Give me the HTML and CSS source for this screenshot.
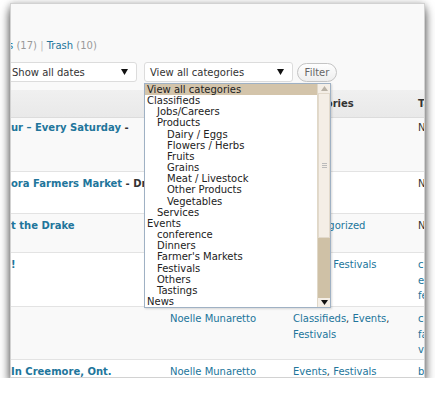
FILE: index.html
```html
<!DOCTYPE html>
<html>
<head>
<meta charset="utf-8">
<link rel="stylesheet" href="styles.css">
</head>
<body>
<div class="window">
  <div class="status"><a class="cut">s</a> <span class="count">(17)</span> <span class="sep">|</span> <a>Trash</a> <span class="count">(10)</span></div>
  <div class="tablenav">
    <div class="select dates"><span>Show all dates</span><svg class="arrow" width="7" height="6" viewBox="0 0 7 6"><path d="M0 0H7L3.5 6Z"/></svg></div>
    <div class="select cats"><span>View all categories</span><svg class="arrow" width="7" height="6" viewBox="0 0 7 6"><path d="M0 0H7L3.5 6Z"/></svg></div>
    <button class="filter">Filter</button>
  </div>
  <div class="table">
    <div class="row head">
      <div class="cell"></div><div class="cell"></div><div class="cell">Categories</div><div class="cell">Tags</div>
    </div>
    <div class="row alt h54 first">
      <div class="cell title"><a>ur &#8211; Every Saturday</a> <span class="state">-</span></div>
      <div class="cell"></div>
      <div class="cell"></div>
      <div class="cell none">No Tags</div>
    </div>
    <div class="row h42">
      <div class="cell title"><a>ora Farmers Market</a> <span class="state">- Dr</span></div>
      <div class="cell"></div>
      <div class="cell"></div>
      <div class="cell none">No Tags</div>
    </div>
    <div class="row alt h39">
      <div class="cell title"><a>t the Drake</a></div>
      <div class="cell"></div>
      <div class="cell"><a>Uncategorized</a></div>
      <div class="cell none">No Tags</div>
    </div>
    <div class="row h54">
      <div class="cell title"><a>!</a></div>
      <div class="cell"></div>
      <div class="cell"><a>Events</a>, <a>Festivals</a></div>
      <div class="cell tags"><a>classifieds</a>, <a>events</a>, <a>festivals</a></div>
    </div>
    <div class="row alt h53">
      <div class="cell title"></div>
      <div class="cell"><a>Noelle Munaretto</a></div>
      <div class="cell"><a>Classifieds</a>, <a>Events</a>, <a>Festivals</a></div>
      <div class="cell tags"><a>canning</a>, <a>farms</a>, <a>vegetables</a></div>
    </div>
    <div class="row h40">
      <div class="cell title"><a>In Creemore, Ont.</a></div>
      <div class="cell"><a>Noelle Munaretto</a></div>
      <div class="cell"><a>Events</a>, <a>Festivals</a></div>
      <div class="cell tags"><a>baking</a></div>
    </div>
  </div>

  <div class="dropdown">
    <ul class="options">
      <li class="selected">View all categories</li>
      <li>Classifieds</li>
      <li class="l1">Jobs/Careers</li>
      <li class="l1">Products</li>
      <li class="l2">Dairy / Eggs</li>
      <li class="l2">Flowers / Herbs</li>
      <li class="l2">Fruits</li>
      <li class="l2">Grains</li>
      <li class="l2">Meat / Livestock</li>
      <li class="l2">Other Products</li>
      <li class="l2">Vegetables</li>
      <li class="l1">Services</li>
      <li>Events</li>
      <li class="l1">conference</li>
      <li class="l1">Dinners</li>
      <li class="l1">Farmer's Markets</li>
      <li class="l1">Festivals</li>
      <li class="l1">Others</li>
      <li class="l1">Tastings</li>
      <li>News</li>
    </ul>
    <div class="scrollbar">
      <div class="btn up"><svg width="7" height="5" viewBox="0 0 7 5"><path d="M0 5H7L3.5 0Z"/></svg></div>
      <div class="thumb"><span class="grip"></span></div>
      <div class="track"></div>
      <div class="btn down"><svg width="7" height="5" viewBox="0 0 7 5"><path d="M0 0H7L3.5 5Z"/></svg></div>
    </div>
  </div>
</div>
</body>
</html>
```

FILE: styles.css
```css
* { box-sizing: border-box; margin: 0; padding: 0; }

body {
  background: #fff;
  font-family: "DejaVu Sans", Verdana, sans-serif;
  font-size: 10px;
  color: #333;
}

a { color: #21759b; text-decoration: none; }

.window {
  position: relative;
  margin: 3px 0 0 10px;
  width: 415px;
  height: 375px;
  border: 1px solid #d2d2d2;
  background: #f9f9f9;
  overflow: hidden;
  box-shadow: 0 7px 10px rgba(0, 0, 0, 0.6), 0 1px 7px rgba(0, 0, 0, 0.3);
}

.status {
  margin-left: -3px;
  padding-top: 35px;
  height: 48px;
  line-height: 13px;
  white-space: nowrap;
  color: #999;
}
.status .sep { color: #bbb; }

.tablenav {
  display: flex;
  align-items: center;
  margin-top: 10px;
  height: 20px;
}

.select {
  display: flex;
  align-items: center;
  justify-content: space-between;
  height: 20px;
  border: 1px solid #dcdcdc;
  border-radius: 3px;
  background: #fff;
  color: #333;
  padding: 0 8px 0 5px;
}
.select .arrow { fill: #111; }
.dates { width: 134px; margin-left: -8px; padding-left: 8px; }
.cats { width: 149px; margin-left: 7px; }

.filter {
  margin-left: 4px;
  width: 40px;
  height: 19px;
  border: 1px solid #c4c4c4;
  border-radius: 10px;
  background: linear-gradient(#fefefe, #eeeeee);
  font-family: "DejaVu Sans", Verdana, sans-serif;
  font-size: 10px;
  color: #666;
}

.table {
  margin-top: 8px;
  width: 490px;
}

.row {
  display: grid;
  grid-template-columns: 159px 123px 125px 80px;
  background: #fff;
  border-bottom: 1px solid #e3e3e3;
}
.row.alt { background: #f9f9f9; }
.row.head {
  height: 28px;
  background: linear-gradient(#f0f0f0, #e9e9e9);
  border-bottom: 1px solid #dcdcdc;
  font-weight: bold;
  line-height: 28px;
}
.h54 { height: 54px; }
.h53 { height: 53px; }
.h42 { height: 42px; }
.h39 { height: 39px; }
.h40 { height: 40px; }

.row:not(.head) .cell {
  padding-top: 4px;
  line-height: 15.5px;
}
.row.first .cell { padding-top: 2px; }
.cell.title { white-space: nowrap; font-weight: bold; }
.cell.title .state { color: #333; }
.cell.none { color: #333; white-space: nowrap; }
.cell.tags { width: 70px; }

.dropdown {
  position: absolute;
  left: 133px;
  top: 79px;
  width: 187px;
  height: 225px;
  border: 1px solid #9fb1c4;
  background: #fff;
  display: flex;
  box-shadow: 1px 1px 2px rgba(0, 0, 0, 0.15);
}

.options {
  list-style: none;
  flex: 1;
  color: #222;
  line-height: 11.15px;
}
.options li { padding-left: 2px; white-space: nowrap; }
.options li.l1 { padding-left: 12px; }
.options li.l2 { padding-left: 22px; }
.options li.selected { background: #d3c4aa; }

.scrollbar {
  width: 13px;
  display: flex;
  flex-direction: column;
  background: #cfc1a6;
  border-left: 1px solid #e0d8c8;
}
.scrollbar .btn {
  height: 9px;
  display: flex;
  align-items: center;
  justify-content: center;
  background: #f4eee6;
}
.scrollbar .up svg { fill: #b9b2a6; }
.scrollbar .down svg { fill: #111; }
.scrollbar .thumb {
  height: 145px;
  background: #f4eee6;
  border: 1px solid #e2d9cb;
  display: flex;
  align-items: center;
  justify-content: center;
}
.scrollbar .grip {
  width: 5px;
  height: 5px;
  border-top: 1px solid #bbb;
  border-bottom: 1px solid #bbb;
  position: relative;
}
.scrollbar .grip::after {
  content: "";
  position: absolute;
  left: 0;
  right: 0;
  top: 1px;
  border-top: 1px solid #bbb;
}
.scrollbar .track { flex: 1; }
```
